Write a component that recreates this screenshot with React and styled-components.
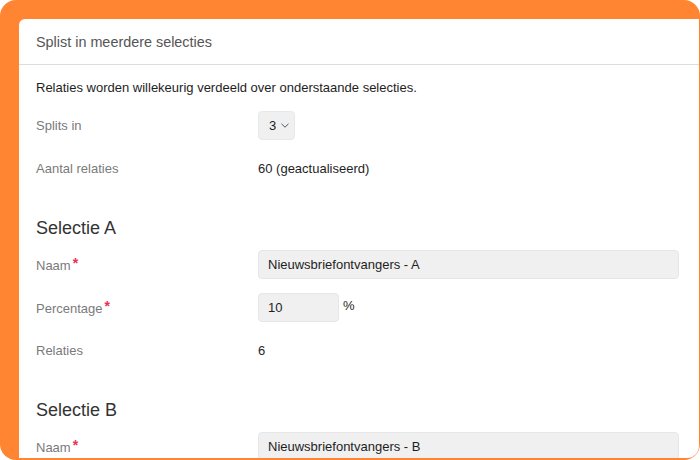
import React from "react";
import styled, { createGlobalStyle } from "styled-components";

const Global = createGlobalStyle`
  html, body { margin: 0; padding: 0; background: #ffffff; }
  body { font-family: "Liberation Sans", Arial, sans-serif; }
  * { box-sizing: border-box; }
`;

const Frame = styled.div`
  width: 700px;
  height: 460px;
  background: #ff8533;
  border-radius: 16px;
  padding: 19px 1px 2px 19px;
  overflow: hidden;
`;

const Card = styled.div`
  background: #ffffff;
  height: 100%;
  border-radius: 6px 0 12px 0;
  overflow: hidden;
  display: flex;
  flex-direction: column;
`;

const Header = styled.div`
  height: 46px;
  flex: none;
  display: flex;
  align-items: center;
  padding: 0 17px;
  border-bottom: 1px solid #dcdcdc;
  font-size: 14.4px;
  color: #555555;
`;

const Body = styled.div`
  padding: 14px 20px 0 17px;
  display: flex;
  flex-direction: column;
`;

const Intro = styled.p`
  margin: 0 0 14px;
  font-size: 13px;
  line-height: 18px;
  color: #1e1e1e;
`;

const Row = styled.div`
  display: grid;
  grid-template-columns: 222px 1fr;
  align-items: center;
  min-height: 29px;
  margin-bottom: 14px;
`;

const Label = styled.div`
  font-size: 13px;
  color: #7a7a7a;
`;

const Req = styled.span`
  color: #e8304f;
  font-size: 14px;
  font-weight: bold;
  position: relative;
  top: -2px;
  margin-left: 2px;
`;

const Value = styled.div`
  font-size: 13px;
  color: #1e1e1e;
  display: flex;
  align-items: center;
  gap: 4px;
`;

const SelectBox = styled.div`
  width: 37px;
  height: 29px;
  border-radius: 4px;
  background: #f0f0f0;
  border: 1px solid #e8e8e8;
  display: flex;
  align-items: center;
  justify-content: center;
  gap: 5px;
  padding-left: 5px;
  font-size: 13px;
  color: #1e1e1e;
`;

const Input = styled.div`
  height: 29px;
  width: ${(p) => p.$w || "100%"};
  border-radius: 4px;
  background: #f0f0f0;
  border: 1px solid #e6e6e6;
  display: flex;
  align-items: center;
  padding: 0 9px;
  font-size: 13px;
  color: #1e1e1e;
`;

const Unit = styled.span`
  font-size: 13px;
  color: #1e1e1e;
  align-self: flex-start;
  margin-top: 5px;
`;

const Heading = styled.h3`
  margin: 20px 0 11px;
  font-size: 18px;
  line-height: 22px;
  font-weight: normal;
  color: #333333;
`;

const Chevron = () => (
  <svg width="8" height="5" viewBox="0 0 8 5" fill="none">
    <path d="M0.5 0.8 L4 4.2 L7.5 0.8" stroke="#555" strokeWidth="1" />
  </svg>
);

const Field = ({ label, required, children }) => (
  <Row>
    <Label>
      {label}
      {required && <Req>*</Req>}
    </Label>
    <Value>{children}</Value>
  </Row>
);

const Selection = ({ letter, percentage, count }) => (
  <>
    <Heading>Selectie {letter}</Heading>
    <Field label="Naam" required>
      <Input>Nieuwsbriefontvangers - {letter}</Input>
    </Field>
    <Field label="Percentage" required>
      <Input $w="81px">{percentage}</Input>
      <Unit>%</Unit>
    </Field>
    <Field label="Relaties">{count}</Field>
  </>
);

export default function App() {
  return (
    <>
      <Global />
      <Frame>
        <Card>
          <Header>Splist in meerdere selecties</Header>
          <Body>
            <Intro>Relaties worden willekeurig verdeeld over onderstaande selecties.</Intro>
            <Field label="Splits in">
              <SelectBox>
                3 <Chevron />
              </SelectBox>
            </Field>
            <Field label="Aantal relaties">60 (geactualiseerd)</Field>
            <Selection letter="A" percentage="10" count="6" />
            <Selection letter="B" percentage="30" count="18" />
          </Body>
        </Card>
      </Frame>
    </>
  );
}
